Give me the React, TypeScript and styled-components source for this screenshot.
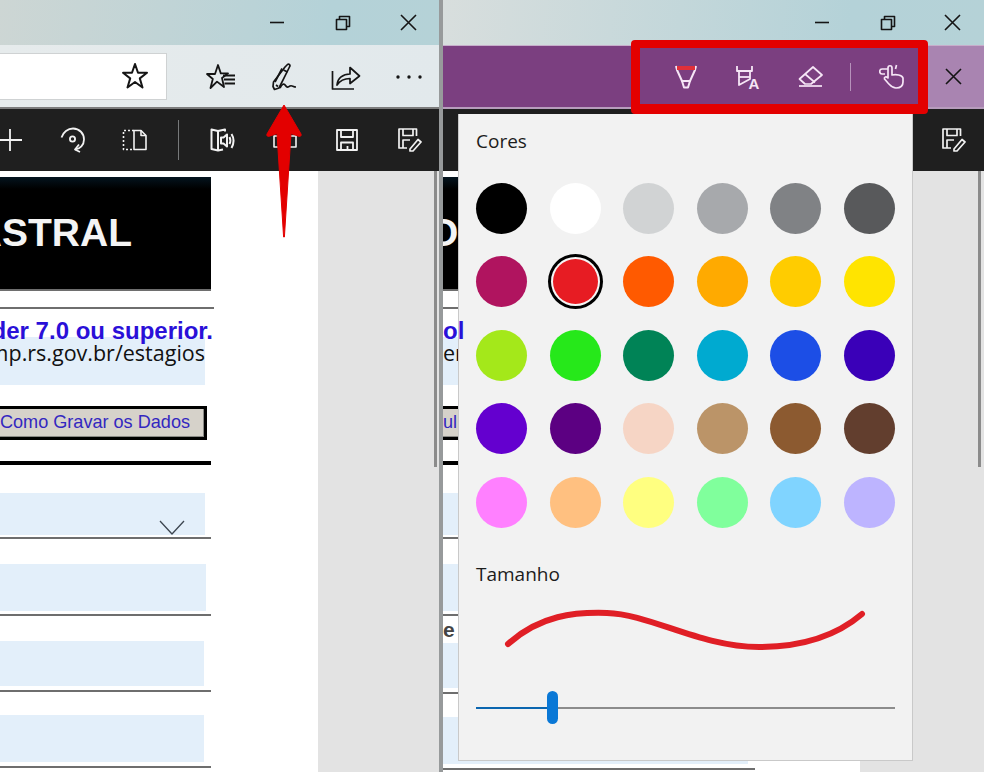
import React from "react";
import styled, { createGlobalStyle } from "styled-components";

const Global = createGlobalStyle`
  html, body { margin: 0; padding: 0; background: #fff; }
  * { box-sizing: border-box; }
`;

const Root = styled.div`
  position: relative;
  display: flex;
  width: 984px;
  height: 772px;
  overflow: hidden;
  font-family: "Open Sans", "Liberation Sans", sans-serif;
`;
const Pane = styled.section<{ $width: number }>`
  position: relative;
  display: flex;
  flex-direction: column;
  flex: 0 0 ${(p) => p.$width}px;
  width: ${(p) => p.$width}px;
  height: 100%;
  overflow: hidden;
`;
const Divider = styled.div`
  flex: 0 0 4px;
  background: #979a9b;
`;
const TitleBar = styled.header<{ $from: string; $nudge: number }>`
  flex: 0 0 45px;
  display: flex;
  justify-content: flex-end;
  align-items: center;
  background: linear-gradient(97deg, ${(p) => p.$from} 0%, #b4d2d8 75%, #b5d2d7 100%);
  & > :last-child {
    margin-right: ${(p) => -p.$nudge}px;
  }
`;
const WinButton = styled.div`
  flex: 0 0 65.3px;
  height: 45px;
  display: flex;
  align-items: center;
  justify-content: center;
`;
const Toolbar = styled.div`
  flex: 0 0 64px;
  display: flex;
  justify-content: space-between;
  align-items: center;
  background: linear-gradient(90deg, #e6ebec, #e2e9ec);
  border-bottom: 2px solid #7c7c7c;
`;
const UrlBox = styled.div`
  flex: 0 0 167px;
  height: 47px;
  display: flex;
  justify-content: flex-end;
  align-items: center;
  padding-right: 17px;
  background: #fff;
  border: 1px solid #cfd2d3;
  border-left: 0;
`;
const Group = styled.div`
  display: flex;
  align-items: center;
  margin-right: -1px;
  padding-top: 1px;
`;
const ToolCell = styled.div<{ $w?: number }>`
  flex: 0 0 ${(p) => p.$w ?? 62.5}px;
  display: flex;
  align-items: center;
  justify-content: center;
`;
const InkBar = styled.div`
  flex: 0 0 64px;
  display: flex;
  background: #a984b1;
  border-top: 1px solid #c7aecb;
  border-bottom: 2px solid #b79cbc;
`;
const InkTools = styled.div`
  flex: 0 0 485px;
  display: flex;
  justify-content: flex-end;
  align-items: center;
  padding-right: 6px;
  background: #7b3f80;
`;
const InkClose = styled.div`
  flex: 1;
  display: flex;
  align-items: center;
  justify-content: center;
  padding-right: 6px;
`;
const InkSep = styled.div`
  flex: 0 0 1px;
  height: 28px;
  margin: 0 9px;
  background: #b692bb;
`;
const DarkBar = styled.div<{ $nudge?: number }>`
  flex: 0 0 62px;
  display: flex;
  justify-content: flex-end;
  align-items: center;
  background: #1f1f1f;
  & > :last-child {
    margin-right: ${(p) => -(p.$nudge ?? 0)}px;
  }
`;
const DarkSep = styled.div`
  flex: 0 0 1px;
  height: 40px;
  margin: 0 12px;
  background: #77797a;
`;
const Page = styled.div`
  flex: 1;
  display: flex;
  min-height: 0;
  background: #e3e3e3;
`;
const Sheet = styled.div<{ $width: number }>`
  flex: 0 0 ${(p) => p.$width}px;
  padding-top: 6px;
  background: #fff;
  overflow: hidden;
`;
const Gutter = styled.div<{ $right: number }>`
  flex: 1;
  display: flex;
  justify-content: flex-end;
  padding-right: ${(p) => p.$right}px;
`;
const Scrollbar = styled.div`
  width: 3px;
  height: 296px;
  background: #8b8b8b;
`;
const Column = styled.div<{ $width: number }>`
  width: ${(p) => p.$width}px;
  display: flex;
  flex-direction: column;
`;
const Banner = styled.div<{ $align: string }>`
  height: 112px;
  margin-right: 3px;
  display: flex;
  align-items: center;
  justify-content: ${(p) => p.$align};
  background: linear-gradient(180deg, #04141f 0, #000 12px);
  color: #f4f4f4;
  font: bold 39px "Liberation Sans", Arial, sans-serif;
  white-space: nowrap;
`;
const BannerText = styled.span<{ $start: number; $end: number }>`
  margin: 0 ${(p) => p.$end}px 0 ${(p) => p.$start}px;
`;
const Rule = styled.div<{ $inset?: number; $top?: number; $thick?: boolean }>`
  flex: 0 0 ${(p) => (p.$thick ? 4 : 2)}px;
  margin-top: ${(p) => p.$top ?? 0}px;
  margin-right: ${(p) => p.$inset ?? 3}px;
  background: ${(p) => (p.$thick ? "#000" : "#6e6e6e")};
`;
const Heading = styled.div<{ $align: string }>`
  flex: 0 0 35px;
  display: flex;
  justify-content: ${(p) => p.$align};
  padding-top: 7.5px;
  margin-right: 1px;
  color: #2a10d8;
  font: bold 24px/27px "Liberation Sans", Arial, sans-serif;
  white-space: nowrap;
  position: relative;
  z-index: 1;
`;
const Block = styled.div<{ $h: number; $top?: number; $inset?: number; $align?: string }>`
  flex: 0 0 ${(p) => p.$h}px;
  margin-top: ${(p) => p.$top ?? 0}px;
  margin-right: ${(p) => p.$inset ?? 9}px;
  display: flex;
  justify-content: ${(p) => p.$align ?? "flex-end"};
  align-items: flex-start;
  background: #e3effa;
`;
const UrlBlock = styled(Block)`
  padding-top: 7px;
  color: #111;
  font: 21.5px/18px "Open Sans", sans-serif;
  white-space: nowrap;
`;
const ChevronBlock = styled(Block)`
  align-items: flex-end;
  padding-right: 20px;
`;
const LegacyButton = styled.div<{ $align: string }>`
  flex: 0 0 34px;
  margin: 21px 7px 0 0;
  display: flex;
  align-items: center;
  justify-content: ${(p) => p.$align};
  padding: 0 14px 2px 0;
  background: #d6d2ca;
  border: 3px solid #000;
  border-left: 0;
  box-shadow: inset -1px -1px 0 #8a8a86;
  color: #3327c0;
  font: 18.1px "Liberation Sans", Arial, sans-serif;
  white-space: nowrap;
`;
const Caption = styled.div`
  flex: 0 0 25px;
  color: #444;
  font: bold 21px/27px "Liberation Sans", Arial, sans-serif;
`;
const Palette = styled.aside`
  position: absolute;
  left: 15px;
  top: 114px;
  width: 455px;
  height: 647px;
  padding: 0 17px;
  background: #f2f2f2;
  border: 1px solid #c9c9c9;
  border-top: 0;
  color: #1c1c1c;
`;
const PanelLabel = styled.div<{ $top: number }>`
  margin-top: ${(p) => p.$top}px;
  font-size: 19px;
  line-height: 26px;
`;
const Swatches = styled.div`
  display: grid;
  grid-template-columns: repeat(6, 51px);
  grid-auto-rows: 51px;
  gap: 22.6px;
  margin-top: 28.5px;
  place-items: center;
`;
const Swatch = styled.div<{ $color: string; $selected?: boolean }>`
  width: ${(p) => (p.$selected ? 45 : 51)}px;
  height: ${(p) => (p.$selected ? 45 : 51)}px;
  border-radius: 50%;
  background: ${(p) => p.$color};
  box-shadow: ${(p) => (p.$selected ? "0 0 0 2px #f6f6f6, 0 0 0 5px #000" : "none")};
`;
const StrokePreview = styled.svg`
  display: block;
  width: 419px;
  height: 52px;
  margin-top: 18px;
`;
const Slider = styled.div`
  display: flex;
  align-items: center;
  width: 419px;
  margin-top: 34px;
`;
const SliderFill = styled.div`
  flex: 0 0 71px;
  height: 2px;
  background: #0b66b0;
`;
const SliderThumb = styled.div`
  flex: 0 0 11px;
  height: 33px;
  border-radius: 6px;
  background: #0a78d6;
`;
const SliderRest = styled.div`
  flex: 1;
  height: 2px;
  background: #8c8c8c;
`;
const Highlight = styled.div`
  position: absolute;
  left: 631px;
  top: 40px;
  width: 297px;
  height: 74px;
  border-style: solid;
  border-color: #e30000;
  border-width: 8px 10px 10px 9px;
  border-radius: 4px;
`;
const Arrow = styled.svg`
  position: absolute;
  left: 262px;
  top: 100px;
  width: 44px;
  height: 140px;
`;
const Glyph = styled.svg<{ $c?: string; $sw?: number }>`
  display: block;
  fill: none;
  stroke: ${(p) => p.$c ?? "#151515"};
  stroke-width: ${(p) => p.$sw ?? 1.6};
  stroke-linejoin: round;
`;

const Ico = ({ w, h, c, sw, children }: { w: number; h: number; c?: string; sw?: number; children: React.ReactNode }) => (
  <Glyph width={w} height={h} viewBox={`0 0 ${w} ${h}`} $c={c} $sw={sw}>
    {children}
  </Glyph>
);

const Minimize = () => <Ico w={15} h={15}><path d="M0 7.5H14" /></Ico>;
const Restore = () => (
  <Ico w={16} h={16}>
    <path d="M1.5 4.5H11.5V14.5H1.5Z" />
    <path d="M4.5 4.5V1.5H14.5V11.5H11.5" />
  </Ico>
);
const Close = () => <Ico w={17} h={17}><path d="M1 1L16 16M16 1L1 16" /></Ico>;
const Star = () => (
  <Ico w={28} h={28} sw={2}>
    <path d="M14 2L17 10.8H26L18.8 16.4L21.5 25.5L14 20L6.5 25.5L9.2 16.4L2 10.8H11Z" />
  </Ico>
);
const Hub = () => (
  <Ico w={30} h={28} sw={1.8}>
    <path d="M12 2L14.8 10.4H22L16 15L18 24L11 18.6L4.5 25L6.8 16L1 11H9Z" />
    <path d="M17 12.5H29M18 16.5H29M18.5 20.5H29" />
  </Ico>
);
const PenSign = () => (
  <Ico w={26} h={28} sw={1.7}>
    <path d="M14 4L16.5 1.5C18 0.5 19.5 2 18.7 3.5L17.5 6L8 25L3.5 26.5L2 23.5L2.5 19Z" />
    <path d="M12.5 7L16.5 9M5 22L7 23.5M11 5.5L4 19" />
    <path d="M9 25C11 21 13 20 14.5 22.5C16 25 17.5 24 19 23C21 22 22 24 25 24" />
  </Ico>
);
const Share = () => (
  <Ico w={30} h={28} sw={1.7}>
    <path d="M1.5 8V26H23" />
    <path d="M6 22C6.5 15 12 11 19 11V4.5L28.5 13L19 20.5V15.5C13 15.5 9 17.5 6 22Z" />
  </Ico>
);
const Dots = () => (
  <svg width="28" height="6" viewBox="0 0 28 6" style={{ display: "block" }}>
    <circle cx="3" cy="3" r="1.7" fill="#151515" />
    <circle cx="14" cy="3" r="1.7" fill="#151515" />
    <circle cx="25" cy="3" r="1.7" fill="#151515" />
  </svg>
);
const WHITE = "#f2f2f2";
const PlusIco = () => <Ico w={24} h={24} c={WHITE} sw={1.8}><path d="M12 1V23M0 12H24" /></Ico>;
const Rotate = () => (
  <Ico w={25} h={26} c={WHITE} sw={1.8}>
    <path d="M1.5 10.5C3 5 8 1.5 13 1.5C19.5 1.5 24 6.5 24 12.5C24 18 20 22 15 22.5" />
    <circle cx="12.5" cy="12" r="2.6" />
    <path d="M19 17.5L15 22.5L20 25" />
  </Ico>
);
const PageSplit = () => (
  <Ico w={25} h={22} c={WHITE} sw={1.6}>
    <path d="M12 1.5H1.5V20.5H12" strokeDasharray="2 2" />
    <path d="M12 1.5H19L24 6.5V20.5H12Z" />
    <path d="M19 1.5V6.5H24" />
  </Ico>
);
const ReadAloud = () => (
  <Ico w={25} h={24} c={WHITE} sw={2}>
    <path d="M15 3.5V1.5L8 3L1.5 1.5V21L8 22.5L13 21.5" />
    <path d="M8 3V22" />
    <path d="M11 9.5H13.5L17 6.5V18.5L13.5 15.5H11Z" />
    <path d="M19.5 9C20.5 11 20.5 14 19.5 16" />
    <path d="M21.5 6C24 10 24 15.5 21.5 20" />
  </Ico>
);
const FitIco = () => (
  <Ico w={24} h={22} c={WHITE} sw={1.6}>
    <path d="M1 7H23V18H1Z" />
    <path d="M8 7V3H16V7" />
  </Ico>
);
const Save = () => (
  <Ico w={22} h={22} c={WHITE} sw={1.8}>
    <path d="M1 1H21V21H1Z" />
    <path d="M5 1V8H17V1" />
    <path d="M5 21V13.5H17V21M11.5 17V21" />
  </Ico>
);
const SaveEdit = () => (
  <Ico w={24} h={24} c={WHITE} sw={1.7}>
    <path d="M9 20H1V1H18.5V8" />
    <path d="M5 1V7.5H15V1" />
    <path d="M5 20V12H12" />
    <path d="M12 21L20 11.5L23 14L15 23H12Z" />
  </Ico>
);
const INK = "#f6e6f6";
const Marker = () => (
  <Ico w={22} h={24} c={INK} sw={2}>
    <path d="M1 1L2 5L7 16H15L20 5L21 1" />
    <path d="M7 16L9 22.5H13L15 16" />
    <rect x="2" y="1" width="18" height="4" fill="#e0303a" stroke="none" />
  </Ico>
);
const MarkerText = () => (
  <Glyph width="26" height="24" viewBox="0 0 26 24" $c={INK} $sw={1.8}>
    <path d="M2 1V6H17V1" />
    <path d="M4 6V20L15 14V6" />
    <path d="M4 12H15" />
    <text x="13.5" y="23.5" fontFamily="Liberation Sans" fontWeight="bold" fontSize="15" fill={INK} stroke="none">A</text>
  </Glyph>
);
const Eraser = () => (
  <Ico w={25} h={21} c={INK} sw={1.7}>
    <path d="M15 1L24 9L13 18H7L1.5 13Z" />
    <path d="M7 8L17 16.5" />
    <path d="M1 20H24" />
  </Ico>
);
const TouchIco = () => (
  <Ico w={25} h={25} c={INK} sw={1.7}>
    <path d="M9 5H3C0 5 0 10 3 10H6" />
    <path d="M9 4C9 1 13 1 13 4V11C17 10 23 11 24 14V18C24 22 21 24 17 24C13 24 12 22 9 19L5.5 15C5 13 7 12 9 14Z" />
    <path d="M17.5 1L16.5 5" />
  </Ico>
);
const Chevron = () => (
  <Ico w={26} h={15} c="#3d4650" sw={1.3}><path d="M1 1L13 14L25 1" /></Ico>
);

const colors = [
  "#000000", "#ffffff", "#d1d3d4", "#a7a9ac", "#808285", "#58595b",
  "#b0145f", "#e71c23", "#ff5a00", "#ffaa00", "#ffcc00", "#ffe400",
  "#a4e81a", "#26e81a", "#008356", "#00aad0", "#1c4ee6", "#3a00b8",
  "#6400cf", "#5c0082", "#f6d5c5", "#bb9468", "#8c5a30", "#623e2e",
  "#ff80ff", "#ffc080", "#ffff80", "#80ff9c", "#80d4ff", "#bdb4ff",
];

type Texts = {
  align: string;
  bannerStart: number;
  bannerEnd: number;
  banner: string;
  heading: string;
  url: string;
  button: string;
  caption: string;
  chevron: boolean;
};

const PageBody = ({ t }: { t: Texts }) => (
  <>
    <Banner $align={t.align}>
      <BannerText $start={t.bannerStart} $end={t.bannerEnd}>{t.banner}</BannerText>
    </Banner>
    <Rule />
    <Rule $top={16} $inset={0} />
    <Heading $align={t.align}>{t.heading}</Heading>
    <UrlBlock $h={48} $top={-7} $align={t.align}>{t.url}</UrlBlock>
    <LegacyButton $align={t.align}>{t.button}</LegacyButton>
    <Rule $top={21} $thick />
    {t.chevron ? (
      <ChevronBlock $h={42} $top={28}><Chevron /></ChevronBlock>
    ) : (
      <Block $h={42} $top={28} />
    )}
    <Rule $top={2} />
    <Block $h={47} $top={25} $inset={8} />
    <Rule $top={3} />
    <Caption>{t.caption}</Caption>
    <Block $h={45} $inset={10} />
    <Rule $top={4} />
    <Block $h={47} $top={23} $inset={10} />
    <Rule $top={4} />
  </>
);

export default function App() {
  return (
    <Root>
      <Global />
      <Pane $width={439}>
        <TitleBar $from="#cdd6d4" $nudge={2}>
          <WinButton><Minimize /></WinButton>
          <WinButton><Restore /></WinButton>
          <WinButton><Close /></WinButton>
        </TitleBar>
        <Toolbar>
          <UrlBox><Star /></UrlBox>
          <Group>
            <ToolCell><Hub /></ToolCell>
            <ToolCell><PenSign /></ToolCell>
            <ToolCell><Share /></ToolCell>
            <ToolCell><Dots /></ToolCell>
          </Group>
        </Toolbar>
        <DarkBar $nudge={2}>
          <ToolCell><PlusIco /></ToolCell>
          <ToolCell><Rotate /></ToolCell>
          <ToolCell><PageSplit /></ToolCell>
          <DarkSep />
          <ToolCell><ReadAloud /></ToolCell>
          <ToolCell><FitIco /></ToolCell>
          <ToolCell><Save /></ToolCell>
          <ToolCell><SaveEdit /></ToolCell>
        </DarkBar>
        <Page>
          <Sheet $width={318}>
            <Column $width={214}>
              <PageBody
                t={{
                  align: "flex-end",
                  bannerStart: 0,
                  bannerEnd: 79,
                  banner: "CADASTRAL",
                  heading: "Acrobat Reader 7.0 ou superior.",
                  url: "www.mp.rs.gov.br/estagios",
                  button: "Como Gravar os Dados",
                  caption: "",
                  chevron: true,
                }}
              />
            </Column>
          </Sheet>
          <Gutter $right={2}><Scrollbar /></Gutter>
        </Page>
      </Pane>
      <Divider />
      <Pane $width={541}>
        <TitleBar $from="#d8dedd" $nudge={1.5}>
          <WinButton><Minimize /></WinButton>
          <WinButton><Restore /></WinButton>
          <WinButton><Close /></WinButton>
        </TitleBar>
        <InkBar>
          <InkTools>
            <ToolCell $w={62}><Marker /></ToolCell>
            <ToolCell $w={62}><MarkerText /></ToolCell>
            <ToolCell $w={62}><Eraser /></ToolCell>
            <InkSep />
            <ToolCell $w={62}><TouchIco /></ToolCell>
          </InkTools>
          <InkClose><Close /></InkClose>
        </InkBar>
        <DarkBar>
          <ToolCell $w={60}><SaveEdit /></ToolCell>
        </DarkBar>
        <Page>
          <Sheet $width={417}>
            <Column $width={315}>
              <PageBody
                t={{
                  align: "flex-start",
                  bannerStart: -15,
                  bannerEnd: 0,
                  banner: "O",
                  heading: "ol",
                  url: "er",
                  button: "ul",
                  caption: "e",
                  chevron: false,
                }}
              />
            </Column>
          </Sheet>
          <Gutter $right={3}><Scrollbar /></Gutter>
        </Page>
        <Palette>
          <PanelLabel $top={14}>Cores</PanelLabel>
          <Swatches>
            {colors.map((c, i) => (
              <Swatch key={c} $color={c} $selected={i === 7} />
            ))}
          </Swatches>
          <PanelLabel $top={33.5}>Tamanho</PanelLabel>
          <StrokePreview viewBox="0 0 419 52">
            <path
              d="M32 39C64 10 99 7 131 8C174 9 224 42 283 42C324 42 359 32 386 9"
              fill="none"
              stroke="#e01f26"
              strokeWidth="6"
              strokeLinecap="round"
            />
          </StrokePreview>
          <Slider>
            <SliderFill />
            <SliderThumb />
            <SliderRest />
          </Slider>
        </Palette>
      </Pane>
      <Highlight />
      <Arrow viewBox="0 0 44 140">
        <path
          d="M22 5L39 34C39.8 36 38 37 36 36L29 33.5L22.4 137H21.6L15 33.5L8 36C6 37 4.2 36 5 34Z"
          fill="#e30000"
          stroke="#e30000"
          strokeLinejoin="round"
        />
      </Arrow>
    </Root>
  );
}
